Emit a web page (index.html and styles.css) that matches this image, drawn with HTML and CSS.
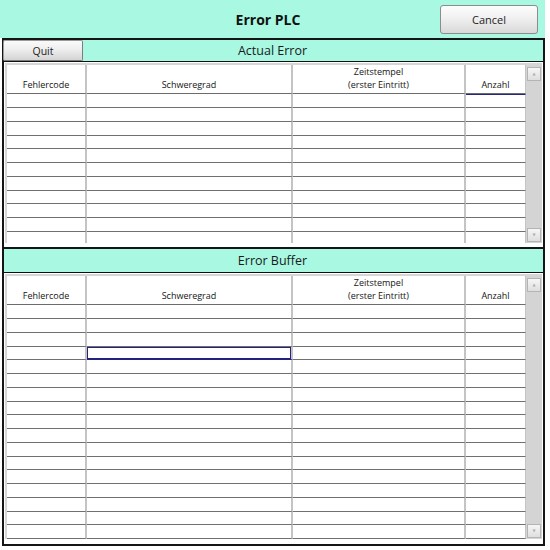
FILE: index.html
```html
<!DOCTYPE html>
<html>
<head>
<meta charset="utf-8">
<link rel="stylesheet" href="styles.css">
</head>
<body>
<div class="titlebar">
  <div class="title">Error PLC</div>
  <button class="btn cancel">Cancel</button>
</div>
<div class="frame">
  <section class="sec">
    <div class="shead first">
      <button class="btn quit">Quit</button>
      <div class="stitle">Actual Error</div>
    </div>
    <div class="twrap">
      <div class="tbox">
        <table class="grid">
          <colgroup><col class="c1"><col class="c2"><col class="c3"><col class="c4"></colgroup>
          <thead><tr><th>Fehlercode</th><th>Schweregrad</th><th>Zeitstempel<br>(erster Eintritt)</th><th>Anzahl</th></tr></thead>
          <tbody>
            <tr><td></td><td></td><td></td><td class="focus"></td></tr>
            <tr><td></td><td></td><td></td><td></td></tr>
            <tr><td></td><td></td><td></td><td></td></tr>
            <tr><td></td><td></td><td></td><td></td></tr>
            <tr><td></td><td></td><td></td><td></td></tr>
            <tr><td></td><td></td><td></td><td></td></tr>
            <tr><td></td><td></td><td></td><td></td></tr>
            <tr><td></td><td></td><td></td><td></td></tr>
            <tr><td></td><td></td><td></td><td></td></tr>
            <tr><td></td><td></td><td></td><td></td></tr>
            <tr class="tail"><td></td><td></td><td></td><td></td></tr>
          </tbody>
        </table>
        <div class="scroll">
          <div class="sbtn">&#9650;</div>
          <div class="sbtn">&#9660;</div>
        </div>
      </div>
    </div>
  </section>
  <section class="sec">
    <div class="shead second">
      <div class="stitle">Error Buffer</div>
    </div>
    <div class="twrap last">
      <div class="tbox">
        <table class="grid">
          <colgroup><col class="c1"><col class="c2"><col class="c3"><col class="c4"></colgroup>
          <thead><tr><th>Fehlercode</th><th>Schweregrad</th><th>Zeitstempel<br>(erster Eintritt)</th><th>Anzahl</th></tr></thead>
          <tbody>
            <tr><td></td><td></td><td></td><td></td></tr>
            <tr><td></td><td></td><td></td><td></td></tr>
            <tr><td></td><td></td><td></td><td></td></tr>
            <tr><td></td><td class="sel"></td><td></td><td></td></tr>
            <tr><td></td><td></td><td></td><td></td></tr>
            <tr><td></td><td></td><td></td><td></td></tr>
            <tr><td></td><td></td><td></td><td></td></tr>
            <tr><td></td><td></td><td></td><td></td></tr>
            <tr><td></td><td></td><td></td><td></td></tr>
            <tr><td></td><td></td><td></td><td></td></tr>
            <tr><td></td><td></td><td></td><td></td></tr>
            <tr><td></td><td></td><td></td><td></td></tr>
            <tr><td></td><td></td><td></td><td></td></tr>
            <tr><td></td><td></td><td></td><td></td></tr>
            <tr><td></td><td></td><td></td><td></td></tr>
            <tr><td></td><td></td><td></td><td></td></tr>
            <tr><td></td><td></td><td></td><td></td></tr>
          </tbody>
        </table>
        <div class="scroll">
          <div class="sbtn">&#9650;</div>
          <div class="sbtn">&#9660;</div>
        </div>
      </div>
    </div>
  </section>
</div>
</body>
</html>
```
FILE: styles.css
```css
* { box-sizing: border-box; }
html, body { margin: 0; padding: 0; background: #ffffff; }
body {
  width: 550px;
  height: 550px;
  overflow: hidden;
  font-family: "Open Sans", "Noto Sans", "DejaVu Sans", sans-serif;
  color: #1a1a1a;
}
.titlebar {
  width: 545px;
  height: 38px;
  background: #a8f8e2;
  display: grid;
  grid-template-columns: 1fr;
  align-items: center;
}
.title {
  grid-area: 1 / 1;
  justify-self: center;
  padding-right: 9px;
  font-weight: 700;
  font-size: 14px;
  color: #111;
}
.btn {
  font-family: "Open Sans", "Noto Sans", sans-serif;
  color: #222;
  padding: 0;
  margin: 0;
  cursor: default;
}
.cancel {
  grid-area: 1 / 1;
  justify-self: end;
  margin-right: 7px;
  width: 98px;
  height: 29px;
  font-size: 11px;
  border: 1px solid #8c8c8c;
  border-radius: 3px;
  background: linear-gradient(#fdfdfd, #f0f0f0 45%, #d9d9d9);
}
.frame {
  margin-left: 2px;
  width: 543px;
  height: 508px;
  border: 2px solid #151515;
  display: flex;
  flex-direction: column;
}
.shead {
  display: grid;
  grid-template-columns: 1fr;
  align-items: center;
  background: #a8f8e2;
  border-bottom: 1px solid #111;
}
.shead.first { height: 22px; }
.shead.second { height: 26px; border-top: 2px solid #151515; }
.stitle {
  grid-area: 1 / 1;
  justify-self: center;
  font-size: 12.5px;
  color: #1a1a1a;
  padding-right: 2px;
}
.quit {
  grid-area: 1 / 1;
  justify-self: start;
  align-self: start;
  margin-left: -1px;
  width: 80px;
  height: 21px;
  font-size: 10.5px;
  border: 1px solid #9a9a9a;
  border-right-color: #7c7c7c;
  border-bottom-color: #7c7c7c;
  border-radius: 2px;
  background: linear-gradient(#fafafa, #eeeeee 45%, #d4d4d4);
}
.twrap { padding: 1px 1px 4px 1px; }
.twrap.last { padding-bottom: 5px; }
.tbox {
  display: flex;
  border-top: 2px solid #d6d6d6;
  border-left: 2px solid #d6d6d6;
}
.grid {
  border-collapse: separate;
  border-spacing: 0;
  table-layout: fixed;
  width: 519px;
}
.c1 { width: 80px; }
.c2 { width: 206px; }
.c3 { width: 173px; }
.c4 { width: 60px; }
.grid th {
  height: 29px;
  padding: 0 0 2px 0;
  vertical-align: bottom;
  text-align: center;
  font-weight: 400;
  font-size: 9px;
  line-height: 12.5px;
  color: #151515;
  border-right: 2px solid #c4c4c4;
  border-bottom: 1px solid #6c6c6c;
}
.grid td {
  height: 14px;
  padding: 0;
  border-right: 2px solid #c4c4c4;
  border-bottom: 1px solid #707070;
}
.grid tbody tr:nth-child(4n) td { height: 13px; }
.grid th:last-child, .grid td:last-child { border-right: 1px solid #c4c4c4; }
.grid tr.tail td { height: 11px; border-bottom: none; }
.grid td.focus { border-top: 1px solid #26267c; }
.grid td.sel { box-shadow: inset 0 0 0 1px #23237e; border-bottom-color: #23237e; }
.scroll {
  width: 16px;
  background: #d4d4d4;
  display: flex;
  flex-direction: column;
  justify-content: space-between;
  padding: 2px 1px 1px 1px;
}
.sbtn {
  height: 14px;
  border: 1px solid #b4b4b4;
  background: linear-gradient(#f6f6f6, #dedede);
  font-size: 4px;
  line-height: 12px;
  text-align: center;
  color: #b0b0b0;
}
```
